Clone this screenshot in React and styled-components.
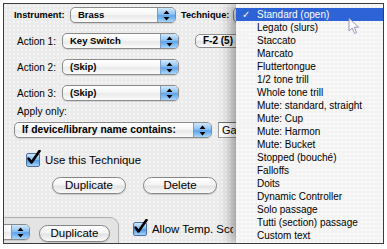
import React from 'react'
import styled, { createGlobalStyle } from 'styled-components'

const GlobalStyle = createGlobalStyle`
html, body {
  margin: 0;
  padding: 0;
  background: #ffffff;
}
body {
  font-family: "Liberation Sans", Arial, sans-serif;
  color: #000;
}
`

const techniques = [
  'Standard (open)',
  'Legato (slurs)',
  'Staccato',
  'Marcato',
  'Fluttertongue',
  '1/2 tone trill',
  'Whole tone trill',
  'Mute: standard, straight',
  'Mute: Cup',
  'Mute: Harmon',
  'Mute: Bucket',
  'Stopped (bouché)',
  'Falloffs',
  'Doits',
  'Dynamic Controller',
  'Solo passage',
  'Tutti (section) passage',
  'Custom text',
]

const Arrows = () => (
  <svg width="7" height="11" viewBox="0 0 7 11">
    <path d="M3.5 0.5 L6.5 4 L0.5 4 Z" fill="#000" />
    <path d="M0.5 7 L6.5 7 L3.5 10.5 Z" fill="#000" />
  </svg>
)

const Popup = ({ width, size, children }) => (
  <PopupBox $w={width}>
    <PopupText $size={size}>{children}</PopupText>
    <PopupArrows>
      <Arrows />
    </PopupArrows>
  </PopupBox>
)

const Check = ({ checked = true }) => (
  <CheckBox>
    {checked && (
      <svg width="16" height="17" viewBox="0 0 16 17">
        <path
          d="M2.5 8.5 L5.5 12.5 L13.5 1"
          fill="none"
          stroke="#000"
          strokeWidth="2.6"
          strokeLinecap="round"
          strokeLinejoin="round"
        />
      </svg>
    )}
  </CheckBox>
)

const App = () => {
  return (
    <Page>
      <GlobalStyle />
      <Window>
        <Upper>
          <Row $top={0}>
            <BoldLabel $w={56}>Instrument:</BoldLabel>
            <Popup width={106} size={9.5}>Brass</Popup>
            <BoldLabel $w={52} style={{ marginLeft: 5 }}>Technique:</BoldLabel>
            {/* covered by the open menu */}
            <Popup width={90} size={9.5} />
          </Row>
          <Row $top={10} $indent={3}>
            <Label $w={45}>Action 1:</Label>
            <Popup width={117} size={9.5}>Key Switch</Popup>
            <SmallButton>F-2 (5)</SmallButton>
          </Row>
          <Row $top={10} $indent={3}>
            <Label $w={45}>Action 2:</Label>
            <Popup width={117} size={9.5}>(Skip)</Popup>
          </Row>
          <Row $top={10} $indent={3}>
            <Label $w={45}>Action 3:</Label>
            <Popup width={117} size={9.5}>(Skip)</Popup>
          </Row>
          <Caption>Apply only:</Caption>
          <Row $top={4}>
            <Popup width={198} size={10.3}>If device/library name contains:</Popup>
            <Field>Ga</Field>
          </Row>
          <CheckRow $top={15} $indent={12}>
            <Check />
            <CheckText>Use this Technique</CheckText>
          </CheckRow>
          <Row $top={10} $indent={38}>
            <Button $w={74}>Duplicate</Button>
            <Button $w={74} style={{ marginLeft: 17 }}>Delete</Button>
          </Row>
        </Upper>
        <Bottom>
          <LowerBox>
            <Shift>
              <Popup width={60} size={9.5} />
            </Shift>
            <Button $w={71} style={{ marginLeft: 9, marginTop: 1 }}>Duplicate</Button>
          </LowerBox>
          <CheckRow $top={5} $indent={14}>
            <Check />
            <CheckText $max={81}>Allow Temp. Score Changes</CheckText>
          </CheckRow>
        </Bottom>
        <Menu>
          {techniques.map((t, i) => (
            <MenuItem key={t} $active={i === 0}>
              <Tick>{i === 0 ? '✓' : ''}</Tick>
              {t}
            </MenuItem>
          ))}
          <Cursor width="14" height="18" viewBox="0 0 14 18">
            <path d="M1 1 L1 14 L4.2 11 L6.6 16.5 L8.6 15.6 L6.3 10.2 L10.6 10.2 Z" fill="#fff" stroke="#8d8db8" strokeWidth="1" />
          </Cursor>
        </Menu>
      </Window>
    </Page>
  )
}

export default App

const Page = styled.div`
width: 387px;
height: 249px;
padding: 3px;
box-sizing: border-box;
`

const Window = styled.div`
position: relative;
width: 381px;
height: 241px;
box-sizing: border-box;
border: 1px solid #3c3c3c;
background-color: #ebebeb;
background-image: radial-gradient(rgba(255, 255, 255, 0.75) 0.6px, transparent 0.9px);
background-size: 4px 4px;
overflow: hidden;
display: flex;
flex-direction: column;
`

const Upper = styled.div`
display: flex;
flex-direction: column;
padding: 3px 0 0 10px;
`

const Row = styled.div`
display: flex;
align-items: center;
height: 16px;
margin-top: ${p => p.$top}px;
padding-left: ${p => p.$indent || 0}px;
`

const CheckRow = styled.div`
display: flex;
align-items: center;
height: 14px;
margin-top: ${p => p.$top}px;
margin-left: ${p => p.$indent}px;
`

const Label = styled.span`
width: ${p => p.$w}px;
flex-shrink: 0;
font-size: 10px;
white-space: nowrap;
`

const BoldLabel = styled(Label)`
font-size: 9.2px;
font-weight: bold;
`

const Caption = styled.div`
margin-top: 5px;
padding-left: 3px;
font-size: 10.2px;
line-height: 12px;
`

const PopupBox = styled.div`
display: flex;
flex-shrink: 0;
width: ${p => p.$w}px;
height: 16px;
box-sizing: border-box;
border: 1px solid #8a8a8a;
border-radius: 5px;
overflow: hidden;
background: linear-gradient(#ffffff, #f6f6f6 45%, #e9e9e9 55%, #fbfbfb);
box-shadow: 0 1px 1px rgba(0, 0, 0, 0.12);
`

const PopupText = styled.span`
flex: 1;
padding-left: 7px;
font-size: ${p => p.$size}px;
font-weight: bold;
line-height: 14px;
white-space: nowrap;
overflow: hidden;
`

const PopupArrows = styled.span`
width: 17px;
flex-shrink: 0;
display: flex;
align-items: center;
justify-content: center;
border-left: 1px solid #7d9cc4;
background: linear-gradient(#d2e8fd, #8ec2f3 45%, #5da3ea 55%, #a9d6fd);
`

const Field = styled.div`
margin-left: 6px;
width: 40px;
height: 16px;
box-sizing: border-box;
flex-shrink: 0;
border: 1px solid #9a9a9a;
border-top-color: #6e6e6e;
background: #fff;
padding-left: 3px;
font-size: 11px;
line-height: 14px;
`

const SmallButton = styled.div`
margin-left: 16px;
width: 55px;
height: 14px;
box-sizing: border-box;
flex-shrink: 0;
border: 1px solid #8c8c8c;
border-radius: 5px;
background: linear-gradient(#ffffff, #f3f3f3 45%, #e4e4e4 55%, #f9f9f9);
padding-left: 7px;
font-size: 10px;
font-weight: bold;
line-height: 12px;
white-space: nowrap;
`

const Button = styled.div`
width: ${p => p.$w}px;
height: 17px;
box-sizing: border-box;
flex-shrink: 0;
border: 1px solid #858585;
border-radius: 9px;
background: linear-gradient(#ffffff, #f4f4f4 45%, #e3e3e3 55%, #fafafa);
box-shadow: 0 1px 1px rgba(0, 0, 0, 0.15);
text-align: center;
font-size: 11.5px;
line-height: 15px;
`

const CheckBox = styled.span`
position: relative;
width: 14px;
height: 14px;
box-sizing: border-box;
flex-shrink: 0;
border: 1px solid #4b6f9e;
border-radius: 2px;
background: linear-gradient(#cfe6fc, #7db8f0 50%, #4f98e4 55%, #a6d3fb);
svg {
  position: absolute;
  left: -1px;
  top: -4px;
}
`

const CheckText = styled.span`
margin-left: 5px;
font-size: 11.4px;
white-space: nowrap;
overflow: hidden;
max-width: ${p => (p.$max ? `${p.$max}px` : 'none')};
`

const Bottom = styled.div`
margin-top: auto;
height: 26px;
display: flex;
align-items: flex-start;
`

const LowerBox = styled.div`
width: 115px;
height: 100%;
box-sizing: border-box;
flex-shrink: 0;
display: flex;
align-items: flex-start;
padding-top: 6px;
border-top: 1px solid #b0b0b0;
border-right: 1px solid #b0b0b0;
border-top-right-radius: 9px;
background: #e4e4e4;
overflow: hidden;
`

const Shift = styled.div`
margin-left: -34px;
`

const Menu = styled.div`
position: absolute;
left: 232px;
top: 0;
right: 0;
bottom: 0;
padding-top: 4px;
background-color: rgba(243, 243, 243, 0.97);
background-image: radial-gradient(rgba(255, 255, 255, 0.9) 0.6px, transparent 0.9px);
background-size: 4px 4px;
box-shadow: -4px 0 12px rgba(0, 0, 0, 0.4);
`

const MenuItem = styled.div`
display: flex;
align-items: center;
height: 13px;
line-height: 13px;
padding-left: 6px;
font-size: 10px;
white-space: nowrap;
color: ${p => (p.$active ? '#fff' : '#000')};
background: ${p => (p.$active ? '#2d63d6' : 'transparent')};
`

const Tick = styled.span`
width: 15px;
font-size: 10px;
`

const Cursor = styled.svg`
position: absolute;
left: 112px;
top: 13px;
opacity: 0.9;
`
